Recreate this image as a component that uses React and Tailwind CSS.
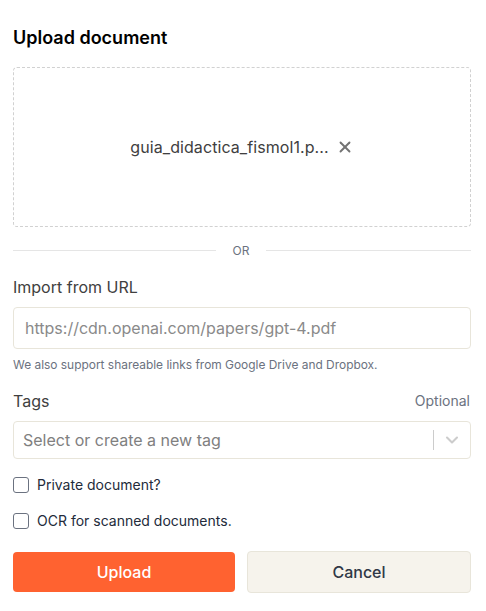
import { X, ChevronDown } from "lucide-react";

const FONT = "font-['Inter',sans-serif]";

const CheckRow = ({ label, className }) => (
  <label className={`flex items-center gap-2 h-4 text-sm leading-4 text-[#232b3a] ${className}`}>
    <input type="checkbox" className="appearance-none m-0 w-4 h-4 rounded-[3px] border border-[#6b7280] bg-white" />
    {label}
  </label>
);

const App = () => {
  return (
    <div className={`${FONT} w-[486px] h-[611px] bg-white pl-[13px] pr-[15px] pt-[28px] overflow-hidden`}>
      <h2 className="text-lg leading-5 font-semibold text-black">Upload document</h2>

      {/* Dropzone */}
      <div className="mt-[19px] h-40 rounded border border-dashed border-[#d1d1d1] flex items-center justify-center gap-[7px]">
        <span className="text-base leading-5 text-[#404040] tracking-[0.005em]">guia_didactica_fismol1.p...</span>
        <X size={18} strokeWidth={2.5} className="text-[#737373]" />
      </div>

      {/* Divider */}
      <div className="mt-[16px] h-[14px] flex items-center">
        <div className="w-[203px] h-px bg-[#e5e5e5]" />
        <span className="w-[50px] pt-px text-center text-xs leading-[14px] text-[#6b7280]">OR</span>
        <div className="flex-1 h-px bg-[#e5e5e5]" />
      </div>

      {/* URL */}
      <label className="block mt-[20px] text-base leading-5 text-[#404040]">Import from URL</label>
      <input
        className="block mt-[10px] w-full h-[42px] rounded border border-[#e8e5da] pl-[11px] pr-3 text-base text-[#404040] placeholder:text-[#8a8a8a] outline-none"
        placeholder="https://cdn.openai.com/papers/gpt-4.pdf"
      />
      <p className="mt-[8px] text-[11.93px] leading-4 text-[#6b7280]">We also support shareable links from Google Drive and Dropbox.</p>

      {/* Tags */}
      <div className="mt-[16px] flex items-center justify-between leading-5">
        <span className="text-base text-[#404040]">Tags</span>
        <span className="text-sm text-[#6b7280] pr-px">Optional</span>
      </div>
      <div className="mt-[8px] h-[38px] rounded border border-[#e8e5da] flex items-center pl-[9px]">
        <span className="flex-1 text-base text-[#808080]">Select or create a new tag</span>
        <div className="w-px h-5 bg-[#cccccc]" />
        <ChevronDown size={20} strokeWidth={2.5} className="mx-2 text-[#cccccc]" />
      </div>

      <CheckRow label="Private document?" className="mt-[18px]" />
      <CheckRow label="OCR for scanned documents." className="mt-[20px]" />

      {/* Actions */}
      <div className="mt-[22px] flex items-center gap-3">
        <button className="w-[222px] h-10 rounded bg-[#ff6230] text-white text-base font-medium">Upload</button>
        <button className="flex-1 h-[42px] rounded border border-[#e8e5da] bg-[#f6f3ec] text-base font-medium text-[#303846]">Cancel</button>
      </div>
    </div>
  );
};

export default App;
